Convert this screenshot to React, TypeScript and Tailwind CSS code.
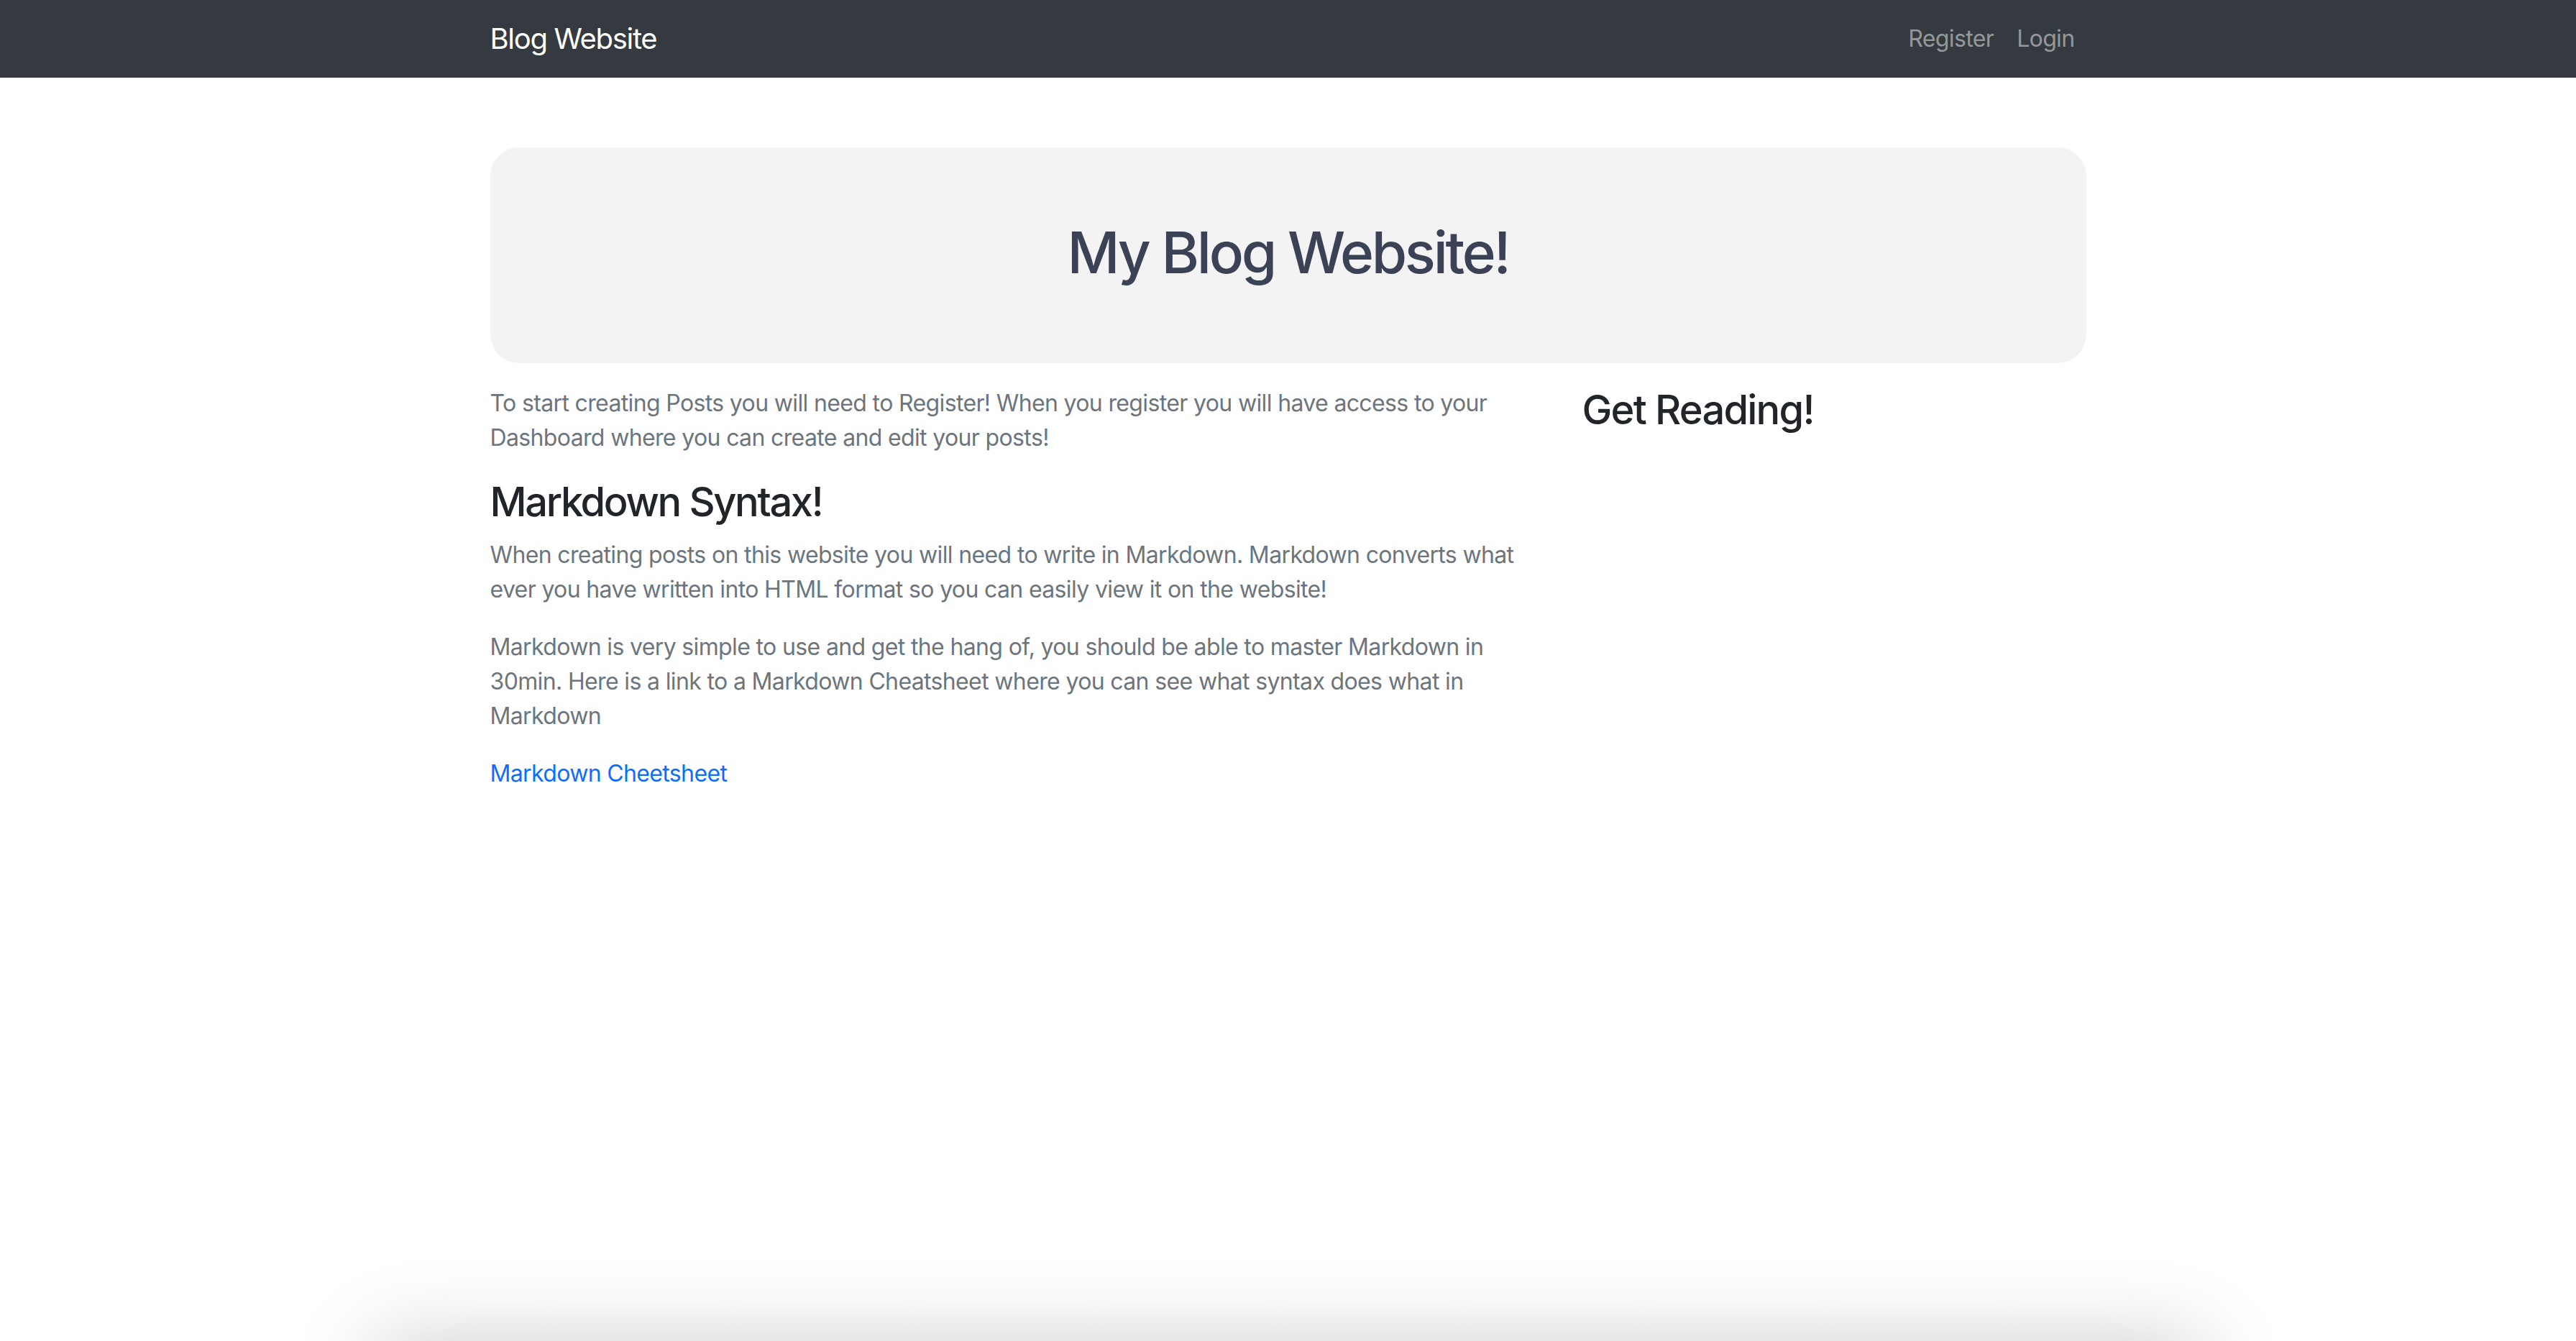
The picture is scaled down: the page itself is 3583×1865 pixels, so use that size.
export default function App() {
  return (
    <div className="h-[1865px] overflow-hidden bg-white font-['Inter','Liberation_Sans',sans-serif]">
      <div className="min-h-[1865px]">
        {/* Navbar */}
        <nav className="h-[108px] bg-[#343a40]">
          <div className="mx-auto flex h-full w-[2220px] items-center justify-between">
            <a className="text-[40px] leading-none tracking-[-0.033em] text-white">Blog Website</a>
            <div className="flex items-center text-[32px] tracking-[-0.02em] text-[#95989b]">
              <a className="px-4">Register</a>
              <a className="px-4">Login</a>
            </div>
          </div>
        </nav>

        <main className="mx-auto w-[2220px] pt-[97px]">
          {/* Jumbotron */}
          <div className="flex h-[300px] items-center justify-center rounded-[40px] bg-[#f3f3f3] pb-[8px]">
            <h1 className="text-[80px] font-medium leading-tight tracking-[-0.041em] text-[#3b4256]">
              My Blog Website!
            </h1>
          </div>

          <div className="mt-8 flex">
            <div className="w-[1463px] text-[32px] leading-[48px] tracking-[-0.02em] text-[#6c757d]">
              <p className="mb-8">
                To start creating Posts you will need to Register! When you register you will have access to your
                Dashboard where you can create and edit your posts!
              </p>
              <h3 className="mb-4 text-[56px] font-medium leading-[1.2] tracking-[-0.042em] text-[#212529]">
                Markdown Syntax!
              </h3>
              <p className="mb-8">
                When creating posts on this website you will need to write in Markdown. Markdown converts what
                ever you have written into HTML format so you can easily view it on the website!
              </p>
              <p className="mb-8">
                Markdown is very simple to use and get the hang of, you should be able to master Markdown in
                30min. Here is a link to a Markdown Cheatsheet where you can see what syntax does what in
                Markdown
              </p>
              <a className="text-[#0d6efd]">Markdown Cheetsheet</a>
            </div>
            <div className="ml-[56px] flex-1">
              <h3 className="text-[56px] font-medium leading-[1.2] tracking-[-0.032em] text-[#212529]">
                Get Reading!
              </h3>
            </div>
          </div>
        </main>
      </div>

      {/* footer sits just below the fold; only its shadow shows */}
      <footer className="mx-auto h-[200px] w-[2540px] bg-white shadow-[0_0_120px_0_rgba(0,0,0,0.2)]" />
    </div>
  );
}
